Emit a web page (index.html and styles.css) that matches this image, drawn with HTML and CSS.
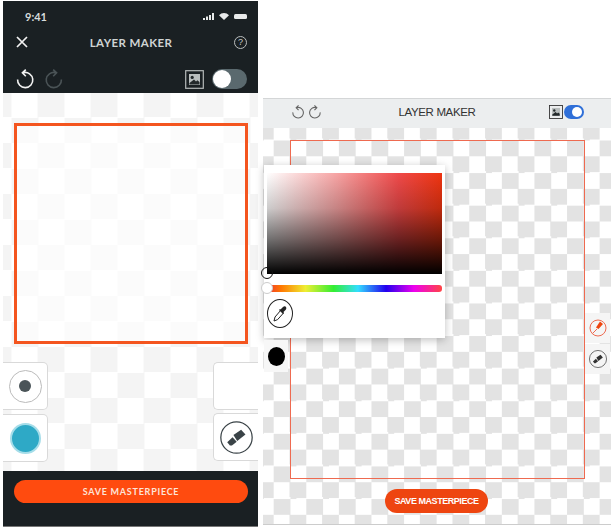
FILE: index.html
```html
<!DOCTYPE html>
<html lang="en">
<head>
    <meta charset="UTF-8">
    <meta name="viewport" content="width=device-width, initial-scale=1.0">
    <title>Layer Maker</title>
    <link rel="stylesheet" href="styles.css">
</head>
<body>
    <svg class="icon-defs" aria-hidden="true">
        <symbol id="undo" viewBox="0 0 20 20">
            <path d="M8.5 3.6A7.6 7.6 0 1 1 2.6 10.5M10.8 .6 7.4 3.8l3.4 3.4" fill="none" stroke="currentColor" stroke-width="1.6"/>
        </symbol>
        <symbol id="picture" viewBox="0 0 19 19">
            <rect x=".7" y=".7" width="17.6" height="17.6" fill="none" stroke="currentColor" stroke-width="1.2"/>
            <path d="M4 4h11v11H4z" fill="#b9bebe"/>
            <circle cx="7.2" cy="7.4" r="1.6" fill="#23292b"/>
            <path d="M4.500 14.500V13L9 9.600l2 2 1.400-1.400 2.100 1.800v2.500z" fill="#23292b"/>
        </symbol>
        <symbol id="eraser" viewBox="0 0 32 32">
            <circle cx="16" cy="16" r="15.2" fill="none" stroke="currentColor" stroke-width="1.2"/>
            <path d="M13 13.5 20.5 8.6l4.2 4.6-8 6.3z" fill="currentColor"/>
            <path d="M7 20.5l5.2-4.8 4 4.4-4.6 3.6H9.6z" fill="currentColor"/>
        </symbol>
    </svg>

    <div class="page">
        <!-- phone version -->
        <section class="phone">
            <header class="phone-head">
                <div class="status">
                    <span>9:41</span>
                    <span class="status-icons">
                        <svg width="44" height="8" viewBox="0 0 44 8">
                            <path d="M0 6h2v2H0zM3 4.500h2V8H3zM6 3h2v5H6zM9 1h2v7H9z" fill="#e8eaea"/>
                            <path d="M16 3.200a7 7 0 0 1 10 0L21 8z" fill="#e8eaea"/>
                            <rect x="31" y="2" width="13" height="5" rx="1.500" fill="#e8eaea"/>
                        </svg>
                    </span>
                </div>
                <div class="title-row">
                    <svg class="close" width="12" height="12" viewBox="0 0 12 12">
                        <path d="M1 1l10 10M11 1 1 11" stroke="#f2f2f2" stroke-width="1.7"/>
                    </svg>
                    <h1>LAYER MAKER</h1>
                    <span class="help">?</span>
                </div>
                <div class="tool-row">
                    <svg class="undo"><use href="#undo"/></svg>
                    <svg class="undo redo"><use href="#undo"/></svg>
                    <svg class="picture"><use href="#picture"/></svg>
                    <span class="toggle"><span class="knob"></span></span>
                </div>
            </header>
            <div class="phone-canvas">
                <div class="phone-frame"></div>
                <div class="phone-tools">
                    <div class="tool-col">
                        <div class="tile tile-left"><span class="brush"><span class="brush-dot"></span></span></div>
                        <div class="tile tile-left"><span class="teal"></span></div>
                    </div>
                    <div class="tool-col tool-col-right">
                        <div class="tile tile-right"></div>
                        <div class="tile tile-right">
                            <svg class="eraser"><use href="#eraser"/></svg>
                        </div>
                    </div>
                </div>
            </div>
            <footer class="phone-foot">
                <button class="phone-save">SAVE MASTERPIECE</button>
            </footer>
        </section>

        <!-- desktop version -->
        <section class="desk">
            <header class="desk-head">
                <div class="desk-history">
                    <svg class="mini-undo"><use href="#undo"/></svg>
                    <svg class="mini-undo redo"><use href="#undo"/></svg>
                </div>
                <h2>LAYER MAKER</h2>
                <div class="desk-right">
                    <svg class="mini-picture"><use href="#picture"/></svg>
                    <span class="desk-toggle"><span class="desk-knob"></span></span>
                </div>
            </header>
            <div class="desk-canvas">
                <div class="desk-frame"></div>
                <button class="desk-save">SAVE MASTERPIECE</button>

                <div class="picker">
                    <div class="shade"></div>
                    <div class="hue"></div>
                    <span class="thumb thumb-shade"></span>
                    <span class="thumb thumb-hue"></span>
                    <span class="dropper">
                        <svg width="16" height="18" viewBox="0 0 16 18">
                            <path d="M9 5 3 12l-1 4 3.600-1.400L11.500 8" fill="none" stroke="#222" stroke-width="1"/>
                            <path d="M8.500 4.500 11 2c1-1 2.500-1 3 0s.5 2-.5 3l-2 2 .5 1-1 1-4-4 1-1z" fill="#222"/>
                        </svg>
                    </span>
                </div>

                <div class="swatch"><span class="swatch-dot"></span></div>

                <div class="side-tools">
                    <div class="side-tile">
                        <svg width="18" height="18" viewBox="0 0 18 18">
                            <circle cx="9" cy="9" r="8" fill="none" stroke="#ee6a50" stroke-width="1"/>
                            <path d="M7 8.500 11 2.500l3 2.500-4.500 5z" fill="#ee4510"/>
                            <path d="M3.500 14.500 8 10" stroke="#ee6a50" stroke-width="1"/>
                        </svg>
                    </div>
                    <div class="side-tile">
                        <svg class="side-eraser"><use href="#eraser"/></svg>
                    </div>
                </div>
            </div>
        </section>
    </div>
</body>
</html>
```

FILE: styles.css
```css
* {
    box-sizing: border-box;
}

body {
    margin: 0;
    background: #fff;
    font-family: "Liberation Sans", Arial, sans-serif;
}

.icon-defs {
    display: none;
}

.page {
    display: flex;
    align-items: flex-start;
    gap: 5px;
    padding: 1px 3px 0;
}

/* phone version */
.phone {
    width: 255px;
    height: 526px;
    display: flex;
    flex-direction: column;
}

.phone-head {
    height: 92px;
    background: #1a2023;
    color: #eceeee;
}

.status {
    height: 30px;
    display: flex;
    align-items: center;
    justify-content: space-between;
    padding: 0 11px 0 22px;
    font-family: Lato, sans-serif;
    font-size: 11px;
    font-weight: 700;
    color: #d8dcdc;
}

.status-icons {
    display: flex;
}

.title-row {
    position: relative;
    height: 22px;
    display: flex;
    align-items: center;
    justify-content: space-between;
    padding: 0 11px 0 13px;
}

.title-row h1 {
    margin: 0;
    font-family: Lato, sans-serif;
    font-size: 11.5px;
    font-weight: 700;
    letter-spacing: .4px;
    color: #cfd3d3;
}

.help {
    width: 13px;
    height: 13px;
    border: 1px solid #b9bdbd;
    border-radius: 50%;
    font-size: 9px;
    line-height: 11px;
    text-align: center;
    color: #c6caca;
}

.tool-row {
    display: flex;
    align-items: center;
    height: 20px;
    margin-top: 16px;
    padding: 0 11px 0 12px;
}

.undo {
    width: 20px;
    height: 20px;
    color: #f2f2f2;
}

.undo.redo {
    margin-left: 9px;
    color: #4a5356;
    transform: scaleX(-1);
}

.picture {
    width: 19px;
    height: 19px;
    margin-left: auto;
    color: #b4b9b9;
}

.toggle {
    width: 35px;
    height: 20px;
    margin-left: 8px;
    padding: 1px;
    border-radius: 10px;
    background: #5a696e;
}

.knob {
    display: block;
    width: 18px;
    height: 18px;
    border-radius: 50%;
    background: #fff;
}

.phone-canvas {
    flex: 1;
    padding-top: 30px;
    background: repeating-conic-gradient(#f4f4f4 0 25%, #fff 0 50%) 8.5px -1px / 53px 51px;
}

.phone-frame {
    width: 234px;
    height: 221px;
    margin-left: 11px;
    border: 3px solid #f4551f;
    background: rgba(255, 255, 255, .65);
}

.phone-tools {
    display: flex;
    justify-content: space-between;
    margin-top: 18px;
}

.tool-col {
    display: flex;
    flex-direction: column;
    gap: 4px;
}

.tool-col-right {
    gap: 3px;
}

.tile {
    width: 45px;
    height: 48px;
    display: flex;
    align-items: center;
    justify-content: center;
    border: 1px solid #d9d9d9;
    background: #fff;
}

.tile-left {
    border-left: 0;
    border-radius: 0 5px 5px 0;
}

.tile-right {
    border-right: 0;
    border-radius: 5px 0 0 5px;
}

.brush {
    width: 33px;
    height: 33px;
    display: flex;
    align-items: center;
    justify-content: center;
    border: 1px solid #bbb;
    border-radius: 50%;
}

.brush-dot {
    width: 12px;
    height: 12px;
    border-radius: 50%;
    background: #4a5458;
}

.teal {
    width: 31px;
    height: 31px;
    border: 2px solid #a5dde9;
    border-radius: 50%;
    background: #2ea9c6;
}

.eraser {
    width: 33px;
    height: 33px;
    color: #3a4347;
}

.phone-foot {
    height: 56px;
    padding: 9px 10px 0 11px;
    background: #1a2023;
    border-bottom: 1px solid #777;
}

.phone-save {
    display: block;
    width: 100%;
    height: 23px;
    padding: 0;
    border: 0;
    border-radius: 12px;
    background: #ff4b0f;
    color: #fde3d8;
    font-family: Lato, sans-serif;
    font-size: 9px;
    font-weight: 700;
    letter-spacing: .75px;
}

/* desktop version */
.desk {
    width: 348px;
    height: 427px;
    margin-top: 97px;
    border-bottom: 1px solid #ccc;
    display: flex;
    flex-direction: column;
}

.desk-head {
    position: relative;
    height: 30px;
    flex: none;
    display: flex;
    align-items: center;
    justify-content: space-between;
    padding: 0 27px 3px 28px;
    background: #eceeef;
    border-top: 1px solid #d4d6d7;
}

.desk-head h2 {
    margin: 0 0 0 3px;
    font-size: 11.5px;
    font-weight: 400;
    letter-spacing: -.35px;
    color: #333;
}

.desk-history,
.desk-right {
    display: flex;
    align-items: center;
}

.desk-history {
    gap: 3px;
}

.mini-undo {
    width: 14px;
    height: 14px;
    color: #666;
}

.mini-undo.redo {
    transform: scaleX(-1);
}

.mini-picture {
    width: 14px;
    height: 14px;
    margin-right: 1px;
    color: #333;
}

.desk-toggle {
    width: 20px;
    height: 14px;
    padding: 2px;
    display: flex;
    justify-content: flex-end;
    border-radius: 7px;
    background: #2f6fd8;
}

.desk-knob {
    width: 10px;
    height: 10px;
    border-radius: 50%;
    background: #fff;
}

.desk-canvas {
    position: relative;
    flex: 1;
    padding-top: 12px;
    background: repeating-conic-gradient(#e3e3e3 0 25%, #fff 0 50%) 10.7px -4.3px / 32.6px 32.6px;
}

.desk-frame {
    width: 295px;
    height: 339px;
    margin-left: 27px;
    border: 1px solid #ee6a50;
}

.desk-save {
    display: block;
    width: 103px;
    height: 24px;
    margin: 10px 0 0 122px;
    padding: 0;
    border: 0;
    border-radius: 12px;
    background: #ee4510;
    color: #fff;
    font-family: "Liberation Sans", Arial, sans-serif;
    font-size: 9px;
    font-weight: 700;
    letter-spacing: -.45px;
}

.picker {
    position: absolute;
    left: 1px;
    top: 37px;
    width: 181px;
    height: 173px;
    background: #fff;
    box-shadow: 0 2px 8px rgba(0, 0, 0, .25);
}

.shade {
    position: absolute;
    left: 3px;
    top: 8px;
    width: 175px;
    height: 101px;
    background:
        linear-gradient(to top, #000, rgba(0, 0, 0, .55) 35%, rgba(0, 0, 0, .2) 65%, rgba(0, 0, 0, 0)),
        linear-gradient(to right, #fff, #f7a3a3 40%, #ef4a4a 75%, #ee3410);
}

.hue {
    position: absolute;
    left: 3px;
    top: 120px;
    width: 175px;
    height: 7px;
    border-radius: 3px;
    background: linear-gradient(to right, #e33, #f70 8%, #ee3 22%, #3e3 38%, #3df 52%, #20e 68%, #e0e 84%, #f44);
}

.thumb {
    position: absolute;
    width: 12px;
    height: 12px;
    border-radius: 50%;
    background: #fff;
}

.thumb-shade {
    left: -3px;
    top: 102px;
    background: transparent;
    border: 1.5px solid #111;
}

.thumb-hue {
    left: -3px;
    top: 117px;
    border: 1px solid #ccc;
}

.dropper {
    position: absolute;
    left: 3px;
    top: 134px;
    width: 26px;
    height: 29px;
    display: flex;
    align-items: center;
    justify-content: center;
    border: 1px solid #222;
    border-radius: 50%;
}

.swatch {
    position: absolute;
    left: 1px;
    top: 212px;
    width: 24px;
    height: 32px;
    display: flex;
    align-items: center;
    justify-content: center;
    background: #f7f7f7;
}

.swatch-dot {
    width: 17px;
    height: 19px;
    border-radius: 50%;
    background: #000;
}

.side-tools {
    position: absolute;
    left: 322px;
    top: 185px;
    display: flex;
    flex-direction: column;
    gap: 1px;
}

.side-tile {
    width: 25px;
    height: 30px;
    display: flex;
    align-items: center;
    justify-content: center;
    background: #f5f5f5;
}

.side-eraser {
    width: 18px;
    height: 18px;
    color: #333;
}
```
